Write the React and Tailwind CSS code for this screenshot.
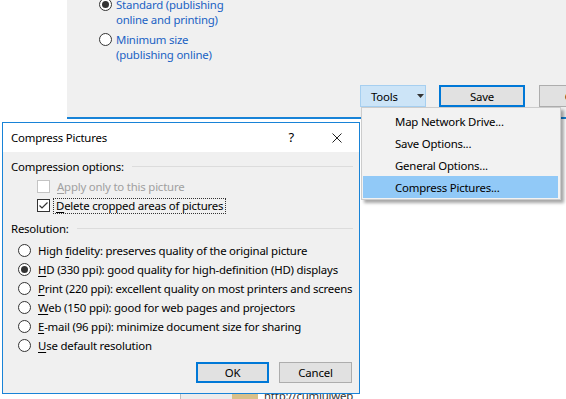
import React from 'react';

const Radio = ({ checked }) => (
  <span className="w-[13px] h-[13px] rounded-full border border-[#333] bg-white flex items-center justify-center shrink-0">
    {checked && <span className="w-[7px] h-[7px] rounded-full bg-[#333]" />}
  </span>
);

const Check = ({ checked, disabled }) => (
  <span
    className={`w-[13px] h-[13px] border bg-white flex items-center justify-center shrink-0 ${
      disabled ? 'border-[#c4c4c4]' : 'border-[#333]'
    }`}
  >
    {checked && (
      <svg width="11" height="11" viewBox="0 0 11 11">
        <path d="M1.5 5.5 L4 8 L9.5 2.5" fill="none" stroke="#333" strokeWidth="1.2" />
      </svg>
    )}
  </span>
);

const Mn = ({ children }) => <span className="underline underline-offset-2">{children}</span>;

const Heading = ({ children }) => (
  <div className="h-[19px] flex items-center pl-[8px] pr-[6px]">
    <span>{children}</span>
    <span className="flex-1 h-px bg-[#dcdcdc] ml-[8px]" />
  </div>
);

const resolutions = [
  [<><span>High </span><Mn>f</Mn><span>idelity: preserves quality of the original picture</span></>, false],
  [<><Mn>H</Mn><span>D (330 ppi): good quality for high-definition (HD) displays</span></>, true],
  [<><Mn>P</Mn><span>rint (220 ppi): excellent quality on most printers and screens</span></>, false],
  [<><Mn>W</Mn><span>eb (150 ppi): good for web pages and projectors</span></>, false],
  [<><Mn>E</Mn><span>-mail (96 ppi): minimize document size for sharing</span></>, false],
  [<><Mn>U</Mn><span>se default resolution</span></>, false],
];

const menuItems = ['Map Network Drive...', 'Save Options...', 'General Options...', 'Compress Pictures...'];

export default function App() {
  return (
    <div className="relative w-[566px] h-[399px] overflow-hidden bg-white text-[11.4px] leading-[15px] tracking-[-0.2px] text-black whitespace-nowrap font-['Segoe_UI','Noto_Sans',sans-serif]">
      {/* save dialog behind */}
      <div className="ml-[67px] h-[122px] bg-[#f0f0f0] border-b-2 border-[#1883d7]">
        <div className="-mt-[3px] pl-[32px] flex flex-col gap-[5px] text-[#1a62c4]">
          <div className="flex gap-[4px]">
            <span className="mt-[1px]"><Radio checked /></span>
            <span>Standard (publishing<br />online and printing)</span>
          </div>
          <div className="flex gap-[4px]">
            <span className="mt-[1px]"><Radio /></span>
            <span>Minimum size<br />(publishing online)</span>
          </div>
        </div>
        <div className="mt-[23px] pl-[293px] flex">
          <div className="w-[66px] h-[22px] shrink-0 bg-[#cce4f7] border border-[#a6cff0] flex items-center pl-[10px]">
            <span>Tools</span>
            <svg className="ml-[19px]" width="8" height="4" viewBox="0 0 8 4">
              <path d="M0 0 H7 L3.5 4 Z" fill="#333" />
            </svg>
          </div>
          <div className="ml-[13px] w-[86px] h-[22px] shrink-0 bg-[#e1e1e1] border-2 border-[#0078d7] flex items-center justify-center">
            Save
          </div>
          <div className="ml-[14px] w-[86px] h-[22px] shrink-0 bg-[#e1e1e1] border border-[#adadad] flex items-center justify-center">
            Cancel
          </div>
        </div>
      </div>

      {/* document content peeking out below */}
      <div className="mt-[270px] flex h-[10px]">
        <div className="ml-[180px] w-[52px] bg-[#ececec] border-l border-[#bdbdbd]" />
        <div className="w-[26px] bg-[#d8c08a]" />
        <div className="ml-[6px] -mt-[1px] text-[#333]">http://cumlulweb</div>
      </div>

      {/* tools menu */}
      <div className="absolute left-[361px] top-[107px] w-[200px] h-[93px] bg-[#f2f2f2] border border-[#cccccc] shadow-[3px_3px_3px_rgba(0,0,0,0.35)] pt-[2px]">
        {menuItems.map((item, i) => (
          <div
            key={item}
            className={`h-[22px] mx-[1px] mr-[2px] flex items-center pl-[32px] ${i === 3 ? 'bg-[#91c9f7]' : ''}`}
          >
            {item}
          </div>
        ))}
      </div>

      {/* compress pictures dialog */}
      <div className="absolute left-[2px] top-[122px] w-[358px] h-[272px] border border-[#1883d7] bg-[#f0f0f0] flex flex-col">
        <div className="h-[29px] bg-white flex items-center pl-[8px]">
          <span className="flex-1">Compress Pictures</span>
          <span className="text-[13px]">?</span>
          <svg className="ml-[38px] mr-[17px]" width="10" height="10" viewBox="0 0 10 10">
            <path d="M0.5 0.5 L9.5 9.5 M9.5 0.5 L0.5 9.5" stroke="#222" strokeWidth="1" />
          </svg>
        </div>
        <div className="pt-[5px]">
          <Heading>Compression options:</Heading>
          <div className="mt-[1px] h-[19px] flex items-center pl-[34px] gap-[7px] text-[#a0a0a0]">
            <Check disabled />
            <span><Mn>A</Mn>pply only to this picture</span>
          </div>
          <div className="h-[19px] flex items-center pl-[34px] gap-[4px]">
            <Check checked />
            <span className="px-[2px] outline outline-1 outline-dotted outline-[#333] leading-[14px]">
              <Mn>D</Mn>elete cropped areas of pictures
            </span>
          </div>
          <div className="mt-[4px]">
            <Heading>Resolution:</Heading>
          </div>
          <div className="mt-[3px] flex flex-col">
            {resolutions.map(([label, checked], i) => (
              <div key={i} className="h-[19px] flex items-center pl-[15px] gap-[7px]">
                <Radio checked={checked} />
                <span>{label}</span>
              </div>
            ))}
          </div>
          <div className="mt-[7px] flex justify-end gap-[10px] pr-[7px]">
            <div className="w-[73px] h-[21px] bg-[#e1e1e1] border-2 border-[#0078d7] flex items-center justify-center">
              OK
            </div>
            <div className="w-[73px] h-[21px] bg-[#e1e1e1] border border-[#adadad] flex items-center justify-center">
              Cancel
            </div>
          </div>
        </div>
      </div>
    </div>
  );
}
